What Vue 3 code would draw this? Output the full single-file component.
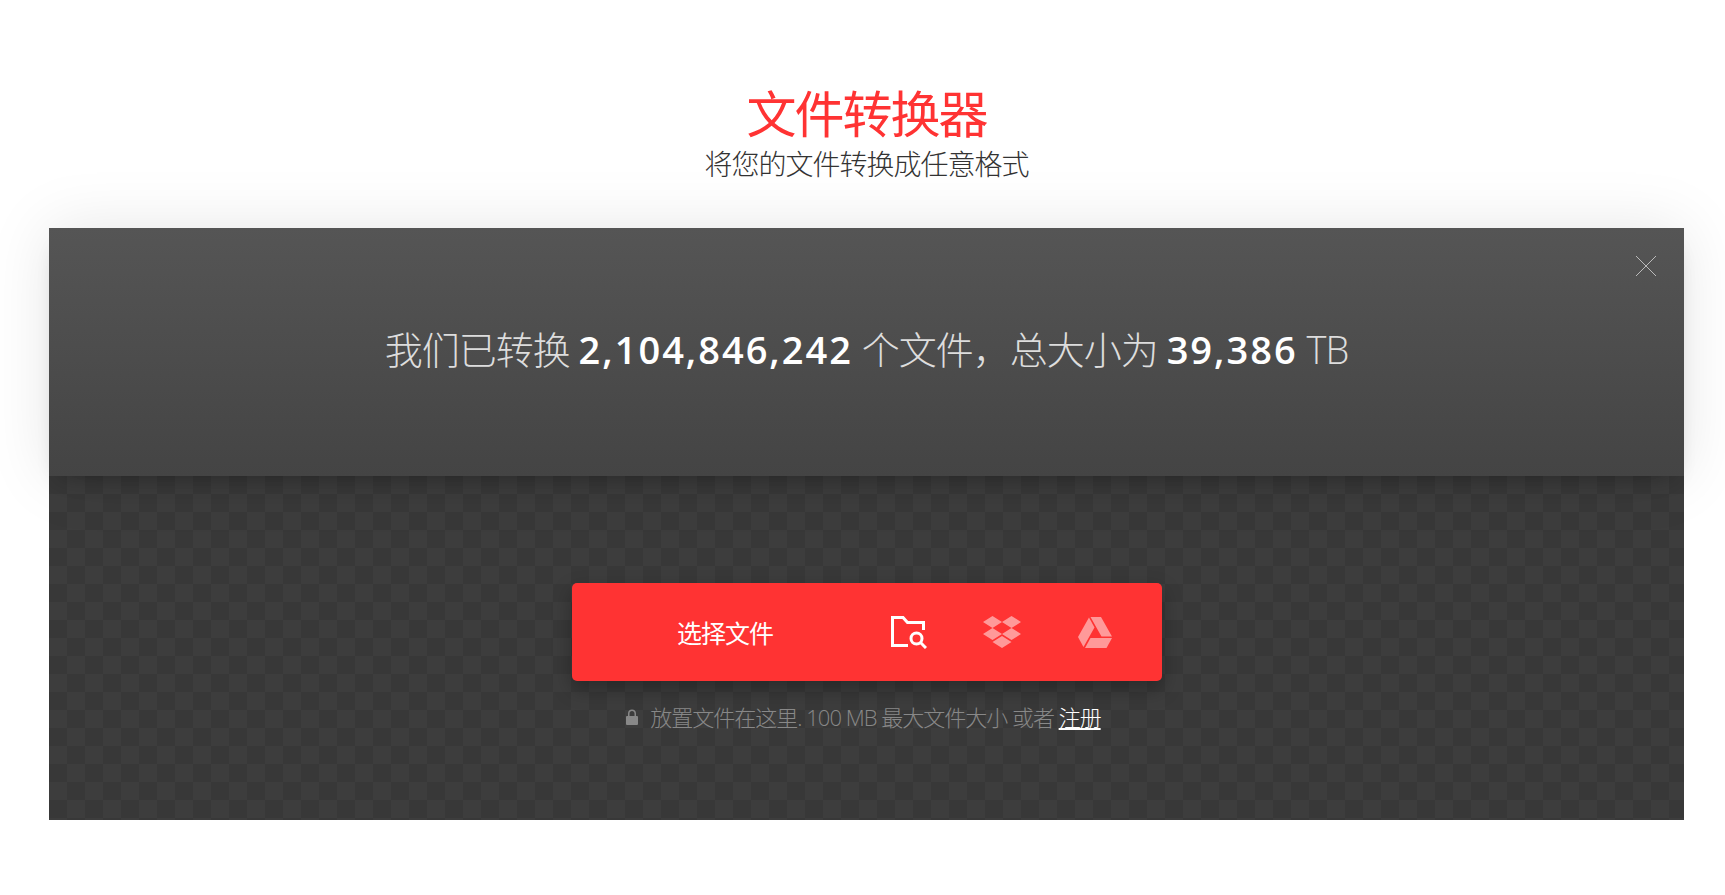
<script setup>
import { computed, ref } from 'vue'

const showStats = ref(true)
const fileInput = ref(null)

const stats = {
  files: 2104846242,
  terabytes: 39386
}

const maxSize = 100

const formatNumber = (n) => n.toLocaleString('en-US')

const totalFiles = computed(() => formatNumber(stats.files))
const totalSize = computed(() => formatNumber(stats.terabytes))

const openPicker = () => {
  fileInput.value.click()
}
</script>

<template>
  <main class="page">
    <header class="intro">
      <h1>文件转换器</h1>
      <p>将您的文件转换成任意格式</p>
    </header>

    <section class="converter">
      <div class="stats" v-if="showStats">
        <p class="stats-text">
          我们已转换 <strong>{{ totalFiles }}</strong> 个文件，总大小为 <strong>{{ totalSize }}</strong> TB
        </p>
        <button class="close" type="button" aria-label="关闭" @click="showStats = false">
          <svg viewBox="0 0 22 22" width="22" height="22">
            <path d="M1 1L21 21M21 1L1 21" />
          </svg>
        </button>
      </div>

      <div class="upload">
        <div class="picker">
          <button class="picker-label" type="button" @click="openPicker">选择文件</button>
          <button class="picker-source active" type="button" aria-label="本地文件" @click="openPicker">
            <svg viewBox="0 0 36 34" width="36" height="34">
              <path
                class="line"
                d="M17 30.500H1.500V2.500H12L16.500 7.500H32.500V15"
              />
              <circle class="line" cx="25.500" cy="23.500" r="5.500" />
              <path class="line" d="M29.500 27.500L35 33" />
            </svg>
          </button>
          <button class="picker-source" type="button" aria-label="Dropbox">
            <svg viewBox="0 0 38 32" width="38" height="32">
              <path
                d="M9.500 0L19 6L9.500 12L0 6ZM28.500 0L38 6L28.500 12L19 6ZM0 18L9.500 12L19 18L9.500 24ZM28.500 12L38 18L28.500 24L19 18ZM9.500 26L19 20L28.500 26L19 32Z"
              />
            </svg>
          </button>
          <button class="picker-source" type="button" aria-label="Google Drive">
            <svg viewBox="0 0 34 31" width="34" height="31">
              <path d="M11 0.500L16.500 10.500L5.500 30L0 20Z" />
              <path d="M12.500 0H23L34 19.500H23.500Z" />
              <path d="M12.500 21H34L28.500 31H7Z" />
            </svg>
          </button>
          <input ref="fileInput" class="file-input" type="file" multiple aria-label="选择文件" />
        </div>

        <p class="hint">
          <svg class="lock" viewBox="0 0 12 16" width="12" height="16">
            <path
              d="M1 7H2V4.500C2 2 3.600 0.500 6 0.500S10 2 10 4.500V7H11Q12 7 12 8V15Q12 16 11 16H1Q0 16 0 15V8Q0 7 1 7ZM3.500 7H8.500V4.500C8.500 3 7.500 2 6 2S3.500 3 3.500 4.500Z"
            />
          </svg>
          <span>放置文件在这里. {{ maxSize }} MB 最大文件大小 或者 <a href="#signup">注册</a></span>
        </p>
      </div>
    </section>
  </main>
</template>

<style>
body {
  background: #fff;
}
</style>

<style scoped>
.page {
  padding: 82px 41px 75px 49px;
  font-family: 'Open Sans', 'Noto Sans CJK SC', sans-serif;
  font-weight: 300;
}

.intro {
  padding-bottom: 46px;
  text-align: center;
}

h1,
p {
  margin: 0;
}

h1 {
  color: #f33;
  font-size: 50px;
  font-weight: 400;
  line-height: 64px;
  letter-spacing: -2px;
}

.intro p {
  color: #333;
  font-size: 28px;
  line-height: 36px;
  letter-spacing: -1px;
}

.converter {
  background-color: #3d3d3d;
}

.stats {
  position: relative;
  display: flex;
  align-items: center;
  justify-content: center;
  box-sizing: border-box;
  min-height: 248px;
  padding-bottom: 6px;
  background: linear-gradient(#555, #444);
  box-shadow: 0 0 60px rgba(0, 0, 0, 0.1), 0 12px 20px -12px rgba(0, 0, 0, 0.3);
}

.stats-text {
  color: #ddd;
  font-size: 38px;
  line-height: 52px;
  letter-spacing: -1px;
}

.stats-text strong {
  color: #fff;
  font-weight: 600;
  letter-spacing: 2px;
}

button {
  padding: 0;
  border: 0;
  background: none;
  font-family: inherit;
  cursor: pointer;
}

.close {
  position: absolute;
  top: 27px;
  right: 27px;
  display: flex;
}

.close path {
  stroke: #bbb;
  stroke-width: 1;
}

.upload {
  display: flex;
  flex-direction: column;
  align-items: center;
  gap: 19px;
  padding: 107px 20px 86px;
  background: repeating-conic-gradient(#3d3d3d 0 25%, #383838 0 50%) 0 0 / 36px 36px;
}

.picker {
  display: flex;
  box-sizing: border-box;
  width: 100%;
  max-width: 590px;
  height: 98px;
  padding: 0 20px;
  border-radius: 5px;
  background: #f33;
  box-shadow: 0 8px 20px rgba(0, 0, 0, 0.3);
}

.picker-label {
  flex: 1;
  padding-right: 4px;
  color: #fff;
  font-size: 25px;
  letter-spacing: -1px;
}

.picker-source {
  display: flex;
  align-items: center;
  justify-content: center;
  width: 93px;
  opacity: 0.5;
}

.picker-source.active {
  opacity: 1;
}

.picker-source path {
  fill: #fff;
}

.picker-source .line {
  fill: none;
  stroke: #fff;
  stroke-width: 3;
}

.file-input {
  display: none;
}

.hint {
  display: flex;
  align-items: center;
  gap: 12px;
  padding-right: 6px;
  color: #888;
  font-size: 22px;
  line-height: 34px;
  letter-spacing: -1px;
}

.lock {
  flex: none;
  fill: #888;
}

.hint a {
  color: #fff;
}
</style>
